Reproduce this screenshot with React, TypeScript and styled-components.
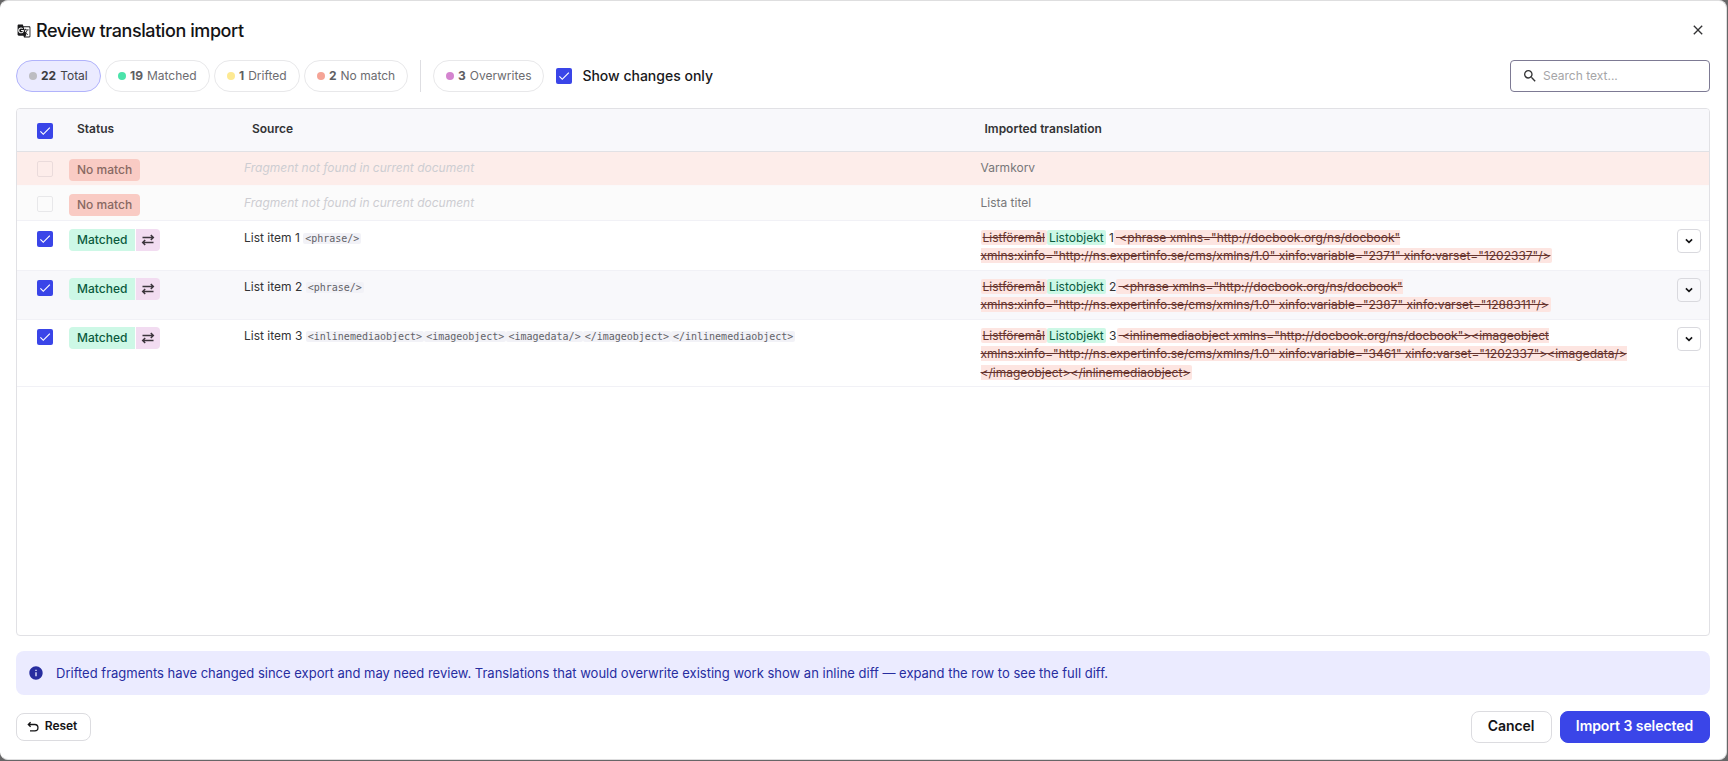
import React from "react";
import styled, { createGlobalStyle, css } from "styled-components";
import { MdCheck, MdClose, MdGTranslate, MdInfo, MdSearch } from "react-icons/md";

const Global = createGlobalStyle`
  * { box-sizing: border-box; }
  body {
    margin: 0;
    background: #666667;
    color: #333335;
    font-family: Inter, "Liberation Sans", sans-serif;
    font-size: 12px;
    overflow: hidden;
  }
  button, input { font: inherit; color: inherit; }
`;

const Dialog = styled.section`
  display: flex;
  flex-direction: column;
  width: 1727px;
  height: 760px;
  padding: 0 16px 16px 15px;
  background: #fff;
  border: 1px solid #dededf;
  border-left-color: #fff;
  border-radius: 8px;
`;

const TitleBar = styled.header`
  display: flex;
  align-items: center;
  height: 59px;
  padding: 0 4px 0 1px;
`;

const Title = styled.h1`
  flex: 1;
  margin: 0 0 0 5px;
  color: #141416;
  font-size: 18px;
  font-weight: 500;
  line-height: 24px;
  letter-spacing: -0.42px;
`;

const CloseButton = styled.button`
  display: grid;
  place-items: center;
  padding: 0 0 2px;
  border: 0;
  background: none;
`;

const FilterBar = styled.div`
  display: flex;
  align-items: center;
  height: 32px;
`;

const Chip = styled.button<{ $width: number; $active?: boolean }>`
  display: flex;
  align-items: center;
  width: ${(p) => p.$width}px;
  height: 32px;
  margin-right: 4px;
  padding: 0 0 2px 12px;
  border: 1px solid ${(p) => (p.$active ? "#b1b3fb" : "#e8e8ea")};
  border-radius: 16px;
  background: ${(p) => (p.$active ? "#ebebff" : "#fff")};
  color: ${(p) => (p.$active ? "#434349" : "#6c6c70")};
  white-space: pre;

  b { font-weight: 700; color: ${(p) => (p.$active ? "#3b3b40" : "#5e5e62")}; margin-right: 4px; }
`;

const Dot = styled.i<{ $color: string }>`
  width: 8px;
  height: 8px;
  margin: 2px 4px 0 0;
  border-radius: 50%;
  background: ${(p) => p.$color};
`;

const Divider = styled.span`
  width: 1px;
  height: 32px;
  margin: 0 12px 0 8px;
  background: #dedee2;
`;

const CheckBox = styled.span<{ $checked?: boolean }>`
  display: grid;
  place-items: center;
  flex: none;
  width: 16px;
  height: 16px;
  border-radius: 2px;
  color: #fff;
  ${(p) => (p.$checked ? css`background: #3a45e8;` : css`border: 1px solid rgba(70, 70, 90, 0.1);`)}
`;

const ToggleLabel = styled.label`
  display: flex;
  align-items: center;
  gap: 10px;
  flex: 1;
  margin-left: 8px;
  color: #19191b;
  font-size: 14px;
  font-weight: 500;
`;

const ToggleText = styled.span`
  padding: 0 0 1px 0.4px;
`;

const SearchBox = styled.div`
  display: flex;
  align-items: center;
  gap: 5px;
  width: 200px;
  height: 32px;
  padding: 0 0 1px 11px;
  border: 1px solid #7d7a94;
  border-radius: 4px;

  input {
    width: 150px;
    padding: 0;
    border: 0;
    outline: 0;
    background: none;
  }
  input::placeholder { color: #a5a5a7; }
`;

const Table = styled.div`
  flex: none;
  height: 528px;
  margin-top: 16px;
  border: 1px solid #e1e1e5;
  border-radius: 4px;
  overflow: hidden;
`;

const columns = css`
  display: grid;
  grid-template-columns: 32px 175px 736.5px 696.5px 1fr;
  align-items: start;
  padding-left: 20px;
`;

const HeadRow = styled.div`
  ${columns}
  height: 43px;
  padding-top: 14px;
  border-bottom: 1px solid #e1e1e5;
  background: #f8f8fb;
  font-weight: 600;

  span + span { padding: 0 0 0 8px; line-height: 12px; }
  span:nth-child(4) { padding-left: 4px; }
`;

type Tone = "error" | "muted" | "plain" | "striped";
const toneFill: Record<Tone, string> = { error: "#fdedea", muted: "#fbfbfb", plain: "#fff", striped: "#f8f8fb" };

const Row = styled.div<{ $tone: Tone; $height: number; $top: number }>`
  ${columns}
  height: ${(p) => p.$height}px;
  padding-top: ${(p) => p.$top}px;
  border-bottom: 1px solid ${(p) => (p.$tone === "error" ? "#fbf9fa" : "#f1f1f6")};
  background: ${(p) => toneFill[p.$tone]};
  line-height: 18.4px;

  ${CheckBox} { margin-top: 2px; }
`;

const Badges = styled.div`
  display: flex;
  gap: 1px;
`;

const Badge = styled.span<{ $kind: "bad" | "good" | "swap"; $round: string }>`
  display: grid;
  place-items: center;
  height: 22px;
  padding: 0 ${(p) => (p.$kind === "swap" ? 5 : 8)}px;
  border-radius: ${(p) => p.$round};
  font-weight: 500;
  background: ${(p) => ({ bad: "#f9cbc4", good: "#cdf8e6", swap: "#f2dcf1" })[p.$kind]};
  color: ${(p) => ({ bad: "#886862", good: "#0a5a3d", swap: "#3c353d" })[p.$kind]};
`;

const Cell = styled.div<{ $muted?: boolean }>`
  white-space: nowrap;
  color: ${(p) => (p.$muted ? "#777779" : "#333335")};
`;

const Missing = styled.em`
  color: #cdcdd2;
`;

const Tag = styled.code`
  padding: 0 2px;
  border-radius: 2px;
  background: #f2f2f7;
  color: #626268;
  font: 10px/14px "DejaVu Sans Mono", monospace;
`;

const Removed = styled.del`
  padding: 0 2px;
  border-radius: 2px;
  background: #fde5e1;
  color: #66342e;
`;

const Added = styled.ins`
  padding: 0 2px;
  border-radius: 2px;
  background: #cdf8e6;
  color: #0a5a3d;
  text-decoration: none;
`;

const ExpandButton = styled.button`
  display: grid;
  place-items: center;
  width: 24px;
  height: 24px;
  padding: 0;
  border: 1px solid #d9d9de;
  border-radius: 4px;
  background: transparent;
  color: #141416;
`;

const Notice = styled.div`
  display: flex;
  align-items: center;
  gap: 12px;
  flex: none;
  height: 44px;
  margin-top: 15px;
  padding-left: 12px;
  border-radius: 8px;
  background: #ebebff;
  color: #272d9f;
  font-size: 13px;
`;

const Footer = styled.footer`
  display: flex;
  align-items: center;
  gap: 8px;
  height: 32px;
  margin-top: 16px;
`;

const Button = styled.button<{ $width: number; $primary?: boolean; $small?: boolean }>`
  display: flex;
  align-items: center;
  justify-content: center;
  gap: 6px;
  width: ${(p) => p.$width}px;
  height: ${(p) => (p.$small ? 28 : 32)}px;
  margin-right: ${(p) => (p.$small ? "auto" : "0")};
  padding: 0 ${(p) => (p.$small ? 2 : 1)}px 3px 0;
  border: 1px solid ${(p) => (p.$primary ? "#3a45e8" : "#dcdce0")};
  border-radius: 8px;
  background: ${(p) => (p.$primary ? "#3a45e8" : "#fff")};
  color: ${(p) => (p.$primary ? "#fff" : "#141416")};
  font-size: ${(p) => (p.$small ? 12 : 14)}px;
  font-weight: 600;
  letter-spacing: -0.06px;
`;

const ResetIcon = styled.svg`
  width: 12px;
  height: 12px;
  margin: 3px 0 0 -1px;
`;

const SwapIcon = () => (
  <svg width="14" height="12" viewBox="0 0 14 12" fill="none" stroke="currentColor" strokeWidth="1.5">
    <path d="M1.5 3.5H12M9.8 1l2.5 2.5L9.8 6M12.5 8.5H2M4.2 6 1.7 8.5 4.2 11" />
  </svg>
);

const ChevronIcon = () => (
  <svg width="8" height="6" viewBox="0 0 8 6" fill="none" stroke="currentColor" strokeWidth="1.6">
    <path d="M0.9 1.4 4 4.4l3.1-3" />
  </svg>
);

const filters = [
  { count: 22, label: "Total", color: "#bdbdc2", width: 85, active: true },
  { count: 19, label: "Matched", color: "#4be3aa", width: 105 },
  { count: 1, label: "Drifted", color: "#fde992", width: 86 },
  { count: 2, label: "No match", color: "#f5a496", width: 104 },
];

const matches = [
  {
    n: 1, tone: "plain" as Tone, height: 50, top: 8, tags: ["<phrase/>"],
    removed: [' <phrase xmlns="http://docbook.org/ns/docbook"', 'xmlns:xinfo="http://ns.expertinfo.se/cms/xmlns/1.0" xinfo:variable="2371" xinfo:varset="1202337"/>'],
  },
  {
    n: 2, tone: "striped" as Tone, height: 49, top: 7, tags: ["<phrase/>"],
    removed: [' <phrase xmlns="http://docbook.org/ns/docbook"', 'xmlns:xinfo="http://ns.expertinfo.se/cms/xmlns/1.0" xinfo:variable="2387" xinfo:varset="1288311"/>'],
  },
  {
    n: 3, tone: "plain" as Tone, height: 67, top: 7,
    tags: ["<inlinemediaobject>", "<imageobject>", "<imagedata/>", "</imageobject>", "</inlinemediaobject>"],
    removed: [
      ' <inlinemediaobject xmlns="http://docbook.org/ns/docbook"><imageobject',
      'xmlns:xinfo="http://ns.expertinfo.se/cms/xmlns/1.0" xinfo:variable="3461" xinfo:varset="1202337"><imagedata/>',
      "</imageobject></inlinemediaobject>",
    ],
  },
];

const missing = [
  { text: "Varmkorv", tone: "error" as Tone, height: 34, top: 7 },
  { text: "Lista titel", tone: "muted" as Tone, height: 35, top: 8 },
];

const Checked = () => (
  <CheckBox $checked><MdCheck size={14} /></CheckBox>
);

export default function App() {
  return (
    <>
      <Global />
      <Dialog>
        <TitleBar>
          <MdGTranslate size={14} color="#19191b" />
          <Title>Review translation import</Title>
          <CloseButton aria-label="Close"><MdClose size={16} /></CloseButton>
        </TitleBar>
        <FilterBar>
          {filters.map((f) => (
            <Chip key={f.label} $width={f.width} $active={f.active}>
              <Dot $color={f.color} /><b>{f.count}</b>{f.label}
            </Chip>
          ))}
          <Divider />
          <Chip $width={111}><Dot $color="#d484cf" /><b>3</b>Overwrites</Chip>
          <ToggleLabel><Checked /><ToggleText>Show changes only</ToggleText></ToggleLabel>
          <SearchBox>
            <MdSearch size={16} />
            <input placeholder="Search text..." />
          </SearchBox>
        </FilterBar>
        <Table>
          <HeadRow>
            <Checked /><span>Status</span><span>Source</span><span>Imported translation</span>
          </HeadRow>
          {missing.map((m) => (
            <Row key={m.text} $tone={m.tone} $height={m.height} $top={m.top}>
              <CheckBox />
              <Badges><Badge $kind="bad" $round="4px">No match</Badge></Badges>
              <Cell><Missing>Fragment not found in current document</Missing></Cell>
              <Cell $muted>{m.text}</Cell>
            </Row>
          ))}
          {matches.map((m) => (
            <Row key={m.n} $tone={m.tone} $height={m.height} $top={m.top}>
              <Checked />
              <Badges>
                <Badge $kind="good" $round="4px 0 0 4px">Matched</Badge>
                <Badge $kind="swap" $round="0 4px 4px 0"><SwapIcon /></Badge>
              </Badges>
              <Cell>
                List item {m.n}{" "}
                {m.tags.map((t) => <Tag key={t}>{t}</Tag>)}
              </Cell>
              <Cell>
                <Removed>Listföremål</Removed><Added>Listobjekt</Added> {m.n}
                <Removed>
                  {m.removed.map((line, i) => (
                    <React.Fragment key={i}>{i > 0 && <br />}{line}</React.Fragment>
                  ))}
                </Removed>
              </Cell>
              <ExpandButton aria-label="Expand"><ChevronIcon /></ExpandButton>
            </Row>
          ))}
        </Table>
        <Notice>
          <MdInfo size={16} />
          Drifted fragments have changed since export and may need review. Translations that would overwrite existing work show an inline diff — expand the row to see the full diff.
        </Notice>
        <Footer>
          <Button $width={75} $small>
            <ResetIcon viewBox="0 0 12 12" fill="none" stroke="currentColor" strokeWidth="1.3">
              <path d="M3.6 1.2 1.3 3.5l2.3 2.3M1.3 3.5h6.5a3 3 0 0 1 0 6.3H3" />
            </ResetIcon>
            Reset
          </Button>
          <Button $width={81}>Cancel</Button>
          <Button $width={150} $primary>Import 3 selected</Button>
        </Footer>
      </Dialog>
    </>
  );
}
